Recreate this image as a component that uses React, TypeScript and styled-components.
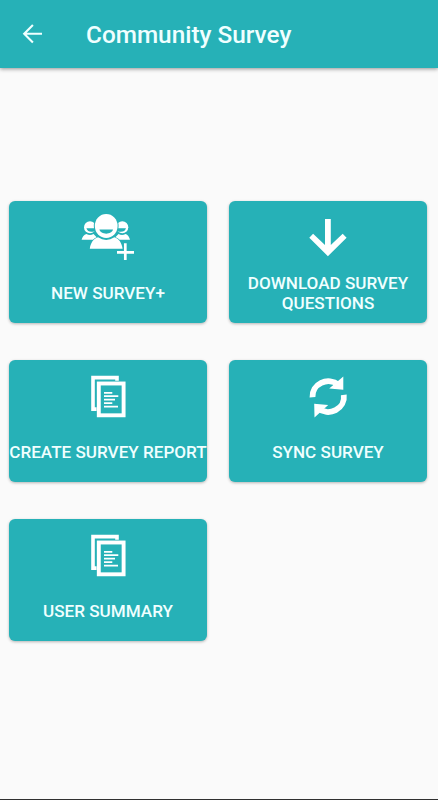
import React from "react";
import styled, { createGlobalStyle } from "styled-components";

const GlobalStyle = createGlobalStyle`
  * { box-sizing: border-box; }
  body { margin: 0; background: #fafafa; font-family: Roboto, "Liberation Sans", sans-serif; }
`;

const Screen = styled.div`
  display: flex;
  flex-direction: column;
  height: 800px;
  width: 438px;
  background: #fafafa;
  border-bottom: 1px solid #303030;
`;

const AppBar = styled.header`
  display: flex;
  align-items: center;
  flex: none;
  height: 68px;
  padding-left: 20px;
  background: #26b1b7;
  box-shadow: 0 1px 4px rgba(0, 0, 0, 0.42);
`;

const BackButton = styled.button`
  display: flex;
  padding: 0;
  border: 0;
  background: none;
`;

const Title = styled.h1`
  margin: 2px 0 0 42px;
  color: #f0ffff;
  font-size: 24.35px;
  font-weight: 500;
  line-height: 32px;
  white-space: nowrap;
`;

const Grid = styled.main`
  display: grid;
  grid-template-columns: 198px 198px;
  grid-auto-rows: 122px;
  gap: 37px 22px;
  padding: 133px 0 0 9px;
`;

const Card = styled.button`
  display: flex;
  flex-direction: column;
  align-items: center;
  padding: 4px 0 0;
  border: 0;
  border-radius: 6px;
  background: #26b1b7;
  box-shadow: 0 1px 3px rgba(0, 0, 0, 0.28);
  font-family: inherit;
`;

const Icon = styled.svg`
  display: block;
  flex: none;
  width: 60px;
  height: 60px;
`;

const Label = styled.span`
  display: flex;
  align-items: center;
  justify-content: center;
  height: 56px;
  color: #f0ffff;
  font-size: 17.1px;
  font-weight: 500;
  line-height: 20px;
  text-align: center;
  white-space: pre;
`;

const teal = "#26b1b7";

const PeopleIcon = () => (
  <Icon viewBox="0 0 60 60" fill="#fff">
    <circle cx="12" cy="22.3" r="6" />
    <circle cx="44.3" cy="22.3" r="6" />
    <path d="M3.6 34.8C4.4 31.5 6 29.4 8.4 28.9Q12 31 15.5 28.9L21 34.8Z" />
    <path d="M52 34.8C51.2 31.5 49.8 29.4 47.6 28.9Q44 31 40.5 28.9L35 34.8Z" />
    <path d="M8.4 23.2H17V26.2Q10 28.2 8.4 23.2ZM48 23.2H39V26.2Q46.5 28.2 48 23.2Z" fill={teal} />
    <path d="M11.8 43.7C12.6 38 15.4 33.6 20 32.3Q28.2 37.5 36.4 32.3C41 33.6 43.8 38 44.6 43.7Z" stroke={teal} strokeWidth="1.2" paintOrder="stroke" />
    <ellipse cx="28.2" cy="21" rx="11.4" ry="11.9" stroke={teal} strokeWidth="2" paintOrder="stroke" />
    <path d="M21.4 24.6H35C33.8 30 22.6 30 21.4 24.6Z" fill={teal} />
    <path d="M47.3 37V56M38 47.4H57" stroke={teal} strokeWidth="4.6" />
    <path d="M47.3 38.2V55M39 47.4H56" stroke="#fff" strokeWidth="2.7" />
  </Icon>
);

const DownloadIcon = () => (
  <Icon viewBox="0 0 60 60" fill="#fff">
    <path d="M27 14H32.8V40L44.7 28.7L48.6 32.7L29.9 51.2L11.3 32.7L15.1 28.7L27 40Z" />
  </Icon>
);

const ReportIcon = () => (
  <Icon viewBox="0 0 60 60" fill="none" stroke="#fff">
    <path d="M18.6 45.1H15V13.6H39V16.8" strokeWidth="3.6" />
    <rect x="20.8" y="19.5" width="24.8" height="31.8" strokeWidth="3.9" />
    <path d="M26 28.8H34.3M26 32.2H40.3M26 35.7H37M26 39.2H34.3M26 42.7H40" strokeWidth="1.8" />
  </Icon>
);

const SyncIcon = () => (
  <Icon viewBox="0 0 60 60">
    <path d="M14.5 33.3A15.8 15.2 0 0 1 40.5 20.8M45.8 30.8A15.8 15.2 0 0 1 19.8 44.3" fill="none" stroke="#fff" strokeWidth="5.8" />
    <path d="M45.3 12.4V25.8L31.2 24.6ZM16.2 39.8L30.2 41.1L16.5 53.4Z" fill="#fff" />
  </Icon>
);

const actions = [
  { label: "NEW SURVEY+", Picture: PeopleIcon },
  { label: "DOWNLOAD SURVEY\nQUESTIONS", Picture: DownloadIcon },
  { label: "CREATE SURVEY REPORT", Picture: ReportIcon },
  { label: "SYNC SURVEY", Picture: SyncIcon },
  { label: "USER SUMMARY", Picture: ReportIcon },
];

export default function App() {
  return (
    <Screen>
      <GlobalStyle />
      <AppBar>
        <BackButton aria-label="Back">
          <svg width="24" height="24" viewBox="0 0 24 24" fill="none" stroke="#f0ffff" strokeWidth="2.1">
            <path d="M22 11.8H4.2M12.9 3.1L4.2 11.8L12.9 20.5" />
          </svg>
        </BackButton>
        <Title>Community Survey</Title>
      </AppBar>
      <Grid>
        {actions.map(({ label, Picture }) => (
          <Card key={label}>
            <Picture />
            <Label>{label}</Label>
          </Card>
        ))}
      </Grid>
    </Screen>
  );
}
